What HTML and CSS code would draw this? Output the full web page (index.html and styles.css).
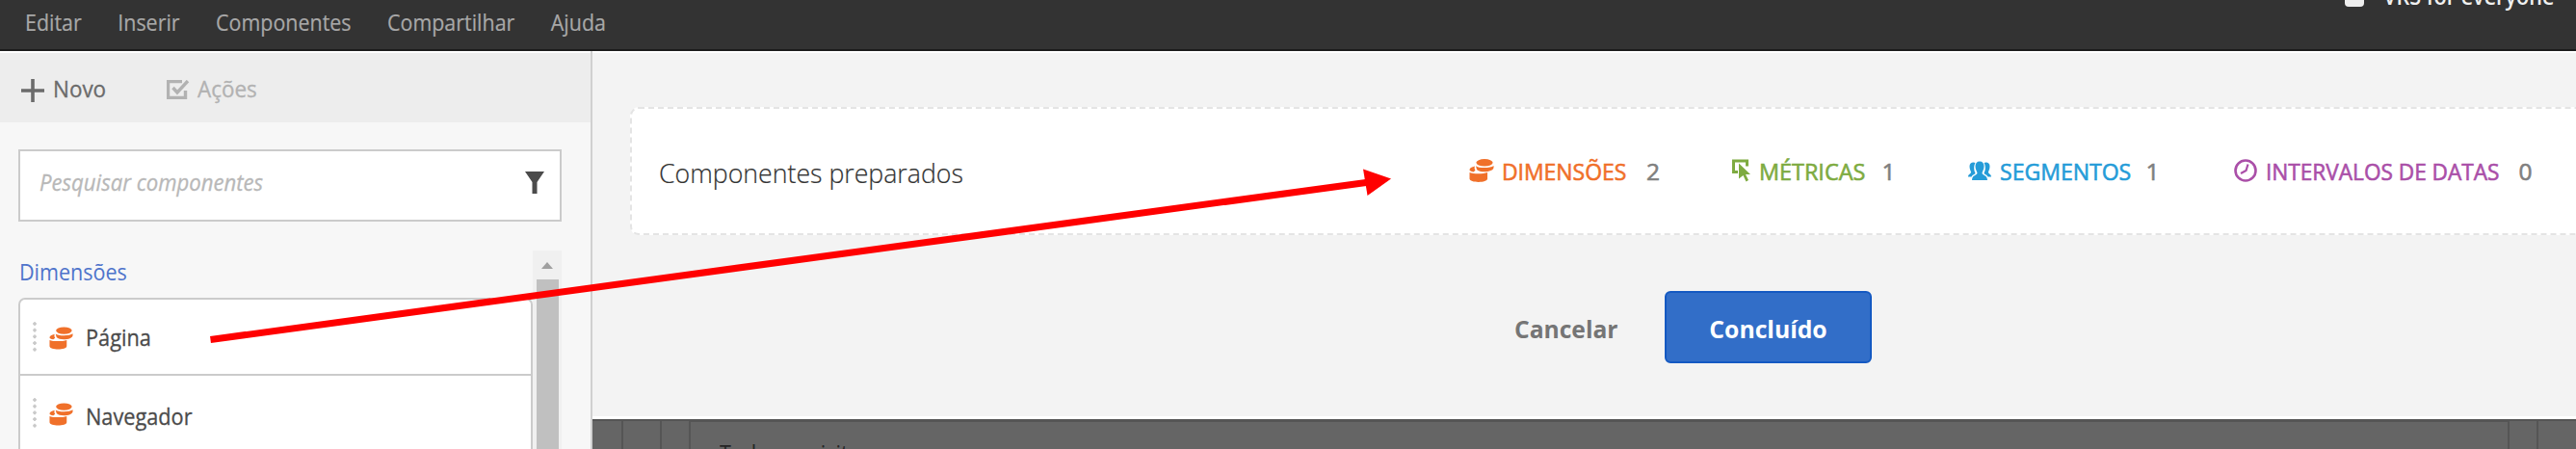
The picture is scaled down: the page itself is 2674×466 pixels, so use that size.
FILE: index.html
```html
<!DOCTYPE html>
<html lang="pt">
<head>
<meta charset="utf-8">
<title>Componentes</title>
<link rel="stylesheet" href="styles.css">
</head>
<body>
<svg class="defs" aria-hidden="true">
  <symbol id="dimension" viewBox="0 0 26 24">
    <ellipse cx="16" cy="3.8" rx="8.6" ry="3.7"/>
    <path d="M7 7.2C9.5 9.7 22.500 9.700 25.500 7v1.800c0 5-14 6-17.500 2.200z"/>
    <path d="M6 7.500C2.500 8.400.500 9.500.500 11.300c0 1 1.500 1.700 4 2.100l2-1.700C5.600 10.500 5.300 9 6 7.500z"/>
    <path d="M.500 14c3.500 1.500 13.500 1.800 18.500 0v6.500c0 4.500-18.500 4.500-18.500 0z"/>
  </symbol>
</svg>
<header class="topbar">
  <nav class="menu"><span>Editar</span><span>Inserir</span><span>Componentes</span><span>Compartilhar</span><span>Ajuda</span></nav>
  <div class="suite"><i class="suite-icon"></i><span>VRS for everyone</span></div>
</header>
<div class="workspace">
  <aside class="sidebar">
    <div class="toolbar">
      <svg class="plus" viewBox="0 0 24 24"><path d="M12 0v24M0 12h24"/></svg>
      <span class="new">Novo</span>
      <svg class="check" viewBox="0 0 24 20"><path d="M16 1.500H1.500v17h18V11"/><path d="M6.500 8l4.500 5L22 1"/></svg>
      <span class="actions">Ações</span>
    </div>
    <div class="search">
      <span>Pesquisar componentes</span>
      <svg viewBox="0 0 20 23"><path d="M0 0h20l-7.500 11v12h-5V11z"/></svg>
    </div>
    <div class="browser">
      <div class="list-col">
        <h2>Dimensões</h2>
        <div class="list">
          <div class="item"><i class="grip"></i><svg><use href="#dimension"/></svg><span>Página</span></div>
          <div class="item"><i class="grip"></i><svg><use href="#dimension"/></svg><span>Navegador</span></div>
        </div>
      </div>
      <div class="scrollbar"><i class="up"></i><i class="thumb"></i></div>
    </div>
  </aside>
  <main class="main">
    <section class="card">
      <h1><span>Componentes preparados</span></h1>
      <div class="stats">
        <div class="stat dim"><svg><use href="#dimension"/></svg><span>DIMENSÕES</span><b>2</b></div>
        <div class="stat met"><svg viewBox="0 0 19 23"><path d="M6 13H1.500V1.500h14V7" fill="none" stroke="currentColor" stroke-width="3"/><path d="M7 4l12 11.500h-5l3 6-2.500 1.500-3-6.500L7 20z"/></svg><span>MÉTRICAS</span><b>1</b></div>
        <div class="stat seg"><svg viewBox="0 0 24 20"><path d="M7.500 2C5 .500 1.500 2 1.500 5.500c0 3 1 4.500 1.500 6 0 2-3 2-3 5h3.500c1-2.500 4-2.500 4-4C6 10.500 5.500 5 7.500 2zM16.500 2c2.500-1.500 6 0 6 3.500 0 3-1 4.500-1.500 6 0 2 3 2 3 5h-3.500c-1-2.500-4-2.500-4-4 1.500-2 2-7.500 0-10.500z"/><path d="M12 .500c-3 0-4.500 2-4.500 5 0 3.500 1.500 5 2 7 0 2.500-5.500 2-5.500 7.500h16c0-5.500-5.500-5-5.500-7.500.500-2 2-3.500 2-7 0-3-1.500-5-4.500-5z"/></svg><span>SEGMENTOS</span><b>1</b></div>
        <div class="stat per"><svg viewBox="0 0 24 24"><g fill="none" stroke="currentColor"><circle cx="12" cy="12" r="10.500" stroke-width="2.600"/><path d="M14.500 5.500L12.500 12l-5.500 3" stroke-width="2.200"/></g></svg><span>INTERVALOS DE DATAS</span><b>0</b></div>
      </div>
    </section>
    <div class="buttons"><span class="cancel">Cancelar</span><span class="done"><span>Concluído</span></span></div>
    <div class="backdrop"><div class="panel"><span>Todas as visitas</span></div><i class="edge"></i></div>
  </main>
</div>
<svg class="arrow" viewBox="0 0 1240 190"><path d="M3.500 177.500L1203 14.500" stroke="#f00" stroke-width="7"/><path d="M1200 .500L1229 10.500 1204.500 28z" fill="#f00"/></svg>
</body>
</html>
```
FILE: styles.css
```css
* { box-sizing: border-box; }
body { margin: 0; width: 2674px; height: 466px; overflow: hidden; position: relative; background: #f2f2f2; font: 24px/32px "Open Sans", sans-serif; color: #4b4b4b; }
svg { display: block; flex: none; fill: currentColor; }
span, h1, h2 { white-space: nowrap; }
span { display: block; flex: none; transform-origin: 0 50%; }
h1, h2 { margin: 0; }
.defs { position: absolute; width: 0; height: 0; }

.topbar { height: 53px; display: flex; justify-content: space-between; background: #333; border-bottom: 2px solid #1c1c1c; color: #a8a8a8; }
.menu { display: flex; gap: 42px; padding-top: 7px; margin-left: 25.500px; transform: scaleX(.893); transform-origin: 0 50%; -webkit-text-stroke: .2px; }
.suite { display: flex; gap: 20px; margin: -20px 22px 0 0; height: 32px; color: #f0f0f0; font-weight: 600; }
.suite span { width: 178px; transform: scaleX(.9); }
.suite-icon { width: 20px; height: 20px; margin-top: 7px; border-radius: 4px; background: #eee; }

.workspace { display: flex; height: 413px; }
.sidebar { width: 615px; flex: none; background: #f7f7f7; border-right: 2px solid #d0d0d0; }
.toolbar { display: flex; height: 74px; border-top: 2px solid #fff; background: #ededed; padding-left: 22px; font-size: 23.500px; color: #6b6b6b; }
.plus { width: 24px; height: 24px; margin: 27px 9px 0 0; stroke: #6b6b6b; stroke-width: 3.600; }
.new, .actions { margin-top: 20.500px; transform: scaleX(.955); -webkit-text-stroke: .3px; }
.new { width: 55px; }
.check { width: 24px; height: 20px; margin: 28px 8px 0 63px; fill: none; stroke: #b2b2b2; stroke-width: 3.400; }
.actions { color: #b2b2b2; }
.search { margin: 28px 0 0 19px; width: 564px; height: 75px; background: #fff; border: 2px solid #cbcbcb; display: flex; justify-content: space-between; padding: 16px 16px 0 20px; font-style: italic; color: #b8b8b8; }
.search span { transform: scaleX(.922); -webkit-text-stroke: .3px; }
.search svg { width: 20px; height: 23px; margin-top: 5px; color: #4b4b4b; }

.browser { display: flex; height: 206px; margin: 30px 0 0 19px; }
.list-col { width: 534px; }
h2 { font-size: 24.500px; font-weight: 400; transform: scaleX(.88); transform-origin: 0 50%; color: #4f74cb; line-height: 32px; padding: 6px 0 0 1px; height: 49px; }
.list { border: 2px solid #cbcbcb; border-bottom: 0; border-radius: 7px 7px 0 0; background: #fff; height: 160px; }
.item { height: 79px; display: flex; border-bottom: 2px solid #cbcbcb; padding-left: 13px; }
.item + .item { height: 80px; border-bottom: 0; }
.grip { width: 4px; height: 31px; margin: 23px 13px 0 0; background: radial-gradient(circle at 2px 2px, #c9c9c9 1.500px, transparent 2px) 0 0 / 4px 6.700px; }
.item svg { width: 25px; height: 24px; margin: 28px 13px 0 0; color: #f0702a; }
.item span { margin-top: 22.500px; transform: scaleX(.905); -webkit-text-stroke: .3px; }
.item + .item span { margin-top: 26px; }
.scrollbar { width: 30px; background: #f0f0f0; display: flex; flex-direction: column; align-items: center; }
.up { border: 6.500px solid transparent; border-top: 0; border-bottom: 7px solid #a0a0a0; margin-top: 12px; }
.thumb { width: 23px; flex: 1; margin-top: 10.500px; background: #c0c0c0; }

.main { flex: 1; border-top: 2px solid #fff; overflow: hidden; min-width: 0; background: #f3f3f3; }
.card { margin: 56px -8px 0 39px; height: 133px; border: 2px dashed #e4e4e4; border-radius: 9px; background: #fff; display: flex; }
h1 { font-size: 28px; line-height: 40px; font-weight: 300; color: #333; width: 843px; padding: 46px 0 0 28px; }
h1 span { transform: scaleX(.953); -webkit-text-stroke: .2px; }
.stats { display: grid; grid-template-columns: 272.500px 245px 276px 330px; padding-left: 26px; padding-top: 52px; }
.stat { display: flex; font-size: 24.500px; height: 32px; }
.stat b { font-weight: 400; color: #808080; margin-left: 18px; }
.stat svg { width: 26px; height: 24px; margin: 0 8px 0 0; }
.stat span, .stat b { margin-top: -3px; -webkit-text-stroke: .6px; }
.dim { color: #f0702a; }
.met { color: #7eab41; }
.seg { color: #259cd8; }
.per { color: #aa4fa8; }
.dim span { width: 132px; transform: scaleX(.935); }
.met span { width: 110px; transform: scaleX(.955); }
.seg span { width: 134px; transform: scaleX(.94); }
.per span { width: 245px; transform: scaleX(.923); }
.met svg { width: 19px; margin-right: 9px; }
.seg svg { width: 24px; height: 20px; margin: 2px 9px 0 0; }
.per svg { width: 24px; margin-right: 9px; }

.buttons { display: flex; align-items: center; height: 75px; margin: 58px 0 0 957px; font-size: 25.500px; font-weight: 700; }
.cancel { width: 156px; color: #757575; transform: scaleX(.965); padding-top: 3px; }
.done { width: 215px; height: 75px; padding-top: 2px; text-align: center; border: 2px solid #1459c2; border-radius: 6px; background: #326ec8; color: #fff; line-height: 71px; }
.done span { transform: scaleX(.97); transform-origin: 50% 50%; }

.backdrop { margin-top: 55px; height: 35px; border-top: 3px solid #fff; display: flex; box-shadow: inset 0 2px #555; background: linear-gradient(90deg, transparent 30px, #555 30px 32px, transparent 32px 70px, #555 70px 72px, transparent 72px), #656565; }
.panel { margin: 1px 0 0 100px; width: 1890px; border: 2px solid #555; border-bottom: 0; padding: 16px 0 0 30px; height: 40px; color: #262626; }
.panel span { transform: scaleX(.9); }
.edge { width: 30px; border-right: 2px solid #555; }
.arrow { position: absolute; left: 215px; top: 175px; width: 1240px; height: 190px; }
```
